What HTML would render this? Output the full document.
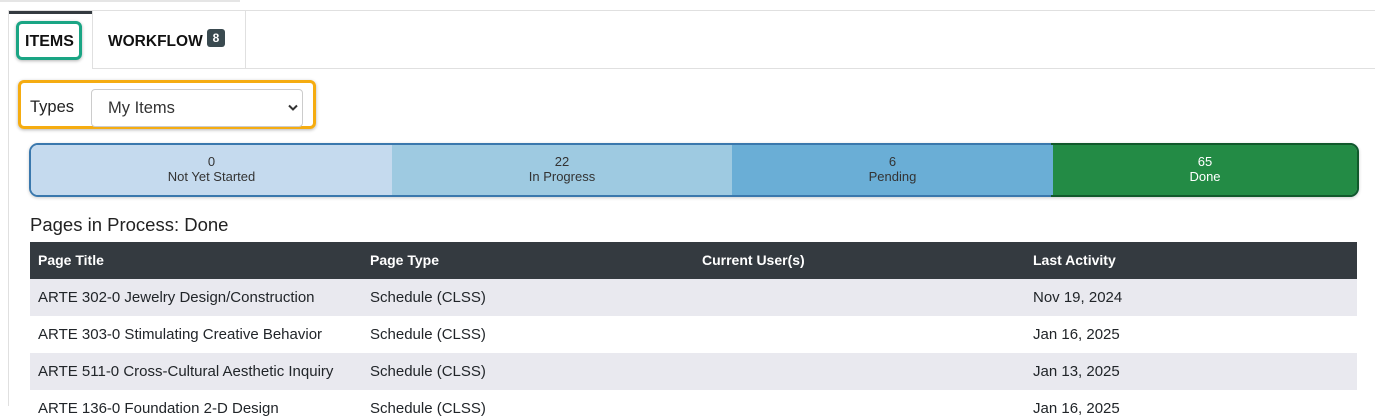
<!DOCTYPE html>
<html><head><meta charset="utf-8"><style>
*{box-sizing:border-box;margin:0;padding:0}
body{width:1375px;height:406px;overflow:hidden;background:#fff;font-family:"Liberation Sans",sans-serif;color:#212529;position:relative}
.abs{position:absolute}
.td{font-size:15px}
</style></head><body>
<div class="abs" style="left:0;top:0;width:240px;height:2px;background:#e5e5e5"></div>
<div class="abs" style="left:8px;top:10px;width:1367px;height:1px;background:#e0e0e0"></div>
<div class="abs" style="left:8px;top:10px;width:1px;height:396px;background:#e0e0e0"></div>
<div class="abs" style="left:9px;top:11px;width:83px;height:3px;background:#343a40"></div>
<div class="abs" style="left:92px;top:11px;width:1px;height:58px;background:#e0e0e0"></div>
<div class="abs" style="left:245px;top:11px;width:1px;height:57px;background:#e0e0e0"></div>
<div class="abs" style="left:92px;top:68px;width:1283px;height:1px;background:#e0e0e0"></div>
<div class="abs" style="left:16px;top:21px;width:66px;height:39px;border:3px solid #1aa584;border-radius:6px;box-shadow:0 1px 3px rgba(0,0,0,.3)"></div>
<div class="abs" style="left:25px;top:33px;font-size:16px;font-weight:bold;color:#111">ITEMS</div>
<div class="abs" style="left:108px;top:33px;font-size:15.5px;font-weight:bold;color:#111">WORKFLOW</div>
<div class="abs" style="left:207px;top:29px;width:18px;height:18px;background:#3a4a50;border-radius:3px;color:#fff;font-size:12px;font-weight:bold;text-align:center;line-height:18px">8</div>
<div class="abs" style="left:18px;top:80px;width:298px;height:49px;border:3px solid #f5ac11;border-radius:6px;box-shadow:0 1px 3px rgba(0,0,0,.3)"></div>
<div class="abs" style="left:30px;top:98px;font-size:16.5px;color:#222">Types</div>
<div class="abs" style="left:91px;top:89px;width:212px;height:38px;border:1px solid #ccc;border-radius:4px;background:#fff"></div>
<div class="abs" style="left:108px;top:99px;font-size:16.5px;color:#333">My Items</div>
<svg class="abs" style="left:288px;top:104px" width="10" height="7" viewBox="0 0 10 7"><path d="M1 1.5L5 5.5L9 1.5" stroke="#333" stroke-width="2" fill="none"/></svg>
<div class="abs" style="left:29px;top:143px;width:1330px;height:54px;border:2px solid #3a78ad;border-radius:9px;overflow:hidden;display:flex;box-shadow:0 1px 3px rgba(0,0,0,.2)">
<div style="width:361px;background:#c5daee;text-align:center;font-size:13px;line-height:15px;padding-top:9px;color:#333">0<br>Not Yet Started</div>
<div style="width:340px;background:#9ecae1;text-align:center;font-size:13px;line-height:15px;padding-top:9px;color:#333">22<br>In Progress</div>
<div style="width:321px;background:#6aaed6;text-align:center;font-size:13px;line-height:15px;padding-top:9px;color:#333">6<br>Pending</div>
<div style="flex:1;background:#238b45;text-align:center;font-size:13px;line-height:15px;padding-top:9px;color:#fff">65<br>Done</div>
</div>
<div class="abs" style="left:1051px;top:143px;width:308px;height:54px;border:2px solid #11592b;border-left:none;border-radius:0 9px 9px 0"></div>
<div class="abs" style="left:30px;top:214px;font-size:18.5px;color:#222">Pages in Process: Done</div>
<div class="abs" style="left:30px;top:242px;width:1327px;height:37px;background:#343a40"></div>
<div class="abs" style="left:30px;top:279px;width:1327px;height:37px;background:#e9e9ef"></div>
<div class="abs" style="left:30px;top:353px;width:1327px;height:37px;background:#e9e9ef"></div>
<div class="abs" style="left:38px;top:252px;font-size:14px;font-weight:bold;color:#fff">Page Title</div>
<div class="abs" style="left:370px;top:252px;font-size:14px;font-weight:bold;color:#fff">Page Type</div>
<div class="abs" style="left:702px;top:252px;font-size:14px;font-weight:bold;color:#fff">Current User(s)</div>
<div class="abs" style="left:1033px;top:252px;font-size:14px;font-weight:bold;color:#fff">Last Activity</div>
<div class="abs td" style="left:38px;top:289px">ARTE 302-0 Jewelry Design/Construction</div>
<div class="abs td" style="left:370px;top:289px">Schedule (CLSS)</div>
<div class="abs td" style="left:1033px;top:289px">Nov 19, 2024</div>
<div class="abs td" style="left:38px;top:326px">ARTE 303-0 Stimulating Creative Behavior</div>
<div class="abs td" style="left:370px;top:326px">Schedule (CLSS)</div>
<div class="abs td" style="left:1033px;top:326px">Jan 16, 2025</div>
<div class="abs td" style="left:38px;top:363px">ARTE 511-0 Cross-Cultural Aesthetic Inquiry</div>
<div class="abs td" style="left:370px;top:363px">Schedule (CLSS)</div>
<div class="abs td" style="left:1033px;top:363px">Jan 13, 2025</div>
<div class="abs td" style="left:38px;top:400px">ARTE 136-0 Foundation 2-D Design</div>
<div class="abs td" style="left:370px;top:400px">Schedule (CLSS)</div>
<div class="abs td" style="left:1033px;top:400px">Jan 16, 2025</div>
</body></html>
